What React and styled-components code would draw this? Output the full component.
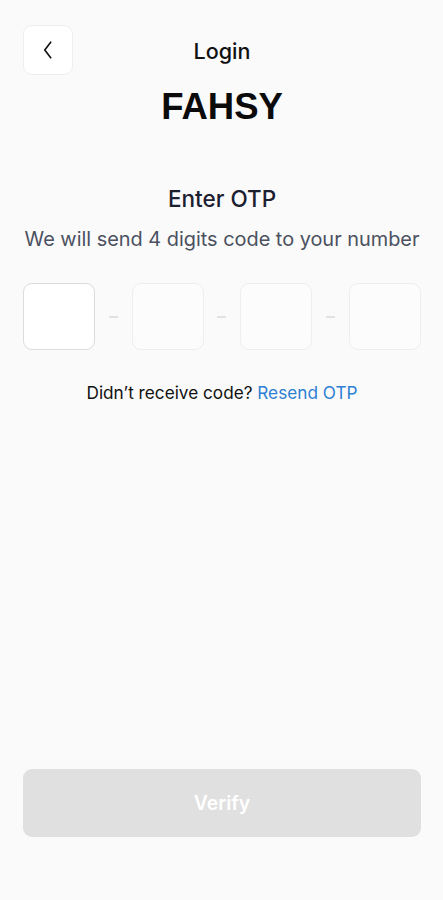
import React, { useState } from "react";
import styled, { createGlobalStyle } from "styled-components";

const GlobalStyle = createGlobalStyle`
  * { box-sizing: border-box; }
  body {
    margin: 0;
    background: #fafafa;
    font-family: Inter, "Noto Sans", sans-serif;
  }
`;

const Page = styled.main`
  min-height: 900px;
  display: flex;
  flex-direction: column;
  padding: 25px 22px 63px 23px;
`;

const Header = styled.header`
  display: grid;
  grid-template-columns: 50px 1fr 50px;
  align-items: center;
  height: 50px;
`;

const BackButton = styled.button`
  width: 50px;
  height: 50px;
  border-radius: 9px;
  border: 1px solid #eeeeee;
  background: #ffffff;
  display: flex;
  align-items: center;
  justify-content: center;
  padding: 0;
  cursor: pointer;
  svg {
    width: 26px;
    height: 26px;
  }
`;

const Title = styled.h1`
  margin: 0;
  text-align: center;
  font-size: 21.5px;
  font-weight: 500;
  line-height: 28px;
  color: #111111;
  transform: translateY(1px);
`;

const Brand = styled.div`
  margin-top: 10px;
  text-align: center;
  font-family: "Liberation Sans", Arial, sans-serif;
  font-weight: 700;
  font-size: 36.5px;
  line-height: 44px;
  color: #0b0b0b;
`;

const Heading = styled.h2`
  margin: 55px 0 0;
  text-align: center;
  font-size: 22.5px;
  font-weight: 500;
  line-height: 30px;
  color: #1b2030;
`;

const Subtitle = styled.p`
  margin: 11px 0 0;
  text-align: center;
  font-size: 19.9px;
  line-height: 28px;
  color: #4b5160;
  white-space: nowrap;
`;

const OtpRow = styled.div`
  margin-top: 30px;
  display: grid;
  grid-template-columns: 72px 1fr 72px 1fr 72px 1fr 72px;
  align-items: center;
`;

const OtpBox = styled.input`
  width: 72px;
  height: 67px;
  border-radius: 9px;
  border: 1px solid ${(p) => (p.$active ? "#dcdcdc" : "#eeeeee")};
  background: ${(p) => (p.$active ? "#ffffff" : "#fcfcfc")};
  text-align: center;
  font-size: 24px;
  font-family: inherit;
  outline: none;
`;

const Dash = styled.span`
  justify-self: center;
  width: 9px;
  height: 2px;
  background: #e2e2e2;
`;

const Resend = styled.p`
  margin: 31px 0 0;
  text-align: center;
  font-size: 17.2px;
  line-height: 24px;
  color: #111111;
  a {
    color: #2d7fd3;
    text-decoration: none;
  }
`;

const Spacer = styled.div`
  flex: 1;
`;

const VerifyButton = styled.button`
  width: 100%;
  height: 68px;
  border: none;
  border-radius: 9px;
  background: #e0e0e0;
  color: #ffffff;
  font-family: inherit;
  font-size: 19.4px;
  font-weight: 600;
`;

export default function App() {
  const [code, setCode] = useState(["", "", "", ""]);

  const changeHandler = (i) => (e) => {
    const next = [...code];
    next[i] = e.target.value.slice(-1);
    setCode(next);
  };

  return (
    <>
      <GlobalStyle />
      <Page>
        <Header>
          <BackButton type="button" aria-label="back">
            <svg viewBox="0 0 24 24" fill="none" stroke="#111" strokeWidth="1.5" strokeLinecap="round" strokeLinejoin="round">
              <path d="M14.5 4.8 9 12l5.5 7.2" />
            </svg>
          </BackButton>
          <Title>Login</Title>
          <span />
        </Header>
        <Brand>FAHSY</Brand>

        <Heading>Enter OTP</Heading>
        <Subtitle>We will send 4 digits code to your number</Subtitle>

        <OtpRow>
          {code.map((v, i) => (
            <React.Fragment key={i}>
              {i > 0 && <Dash />}
              <OtpBox
                $active={i === 0}
                value={v}
                inputMode="numeric"
                onChange={changeHandler(i)}
              />
            </React.Fragment>
          ))}
        </OtpRow>

        <Resend>
          Didn’t receive code? <a href="#resend">Resend OTP</a>
        </Resend>

        <Spacer />
        <VerifyButton type="button" disabled>
          Verify
        </VerifyButton>
      </Page>
    </>
  );
}
